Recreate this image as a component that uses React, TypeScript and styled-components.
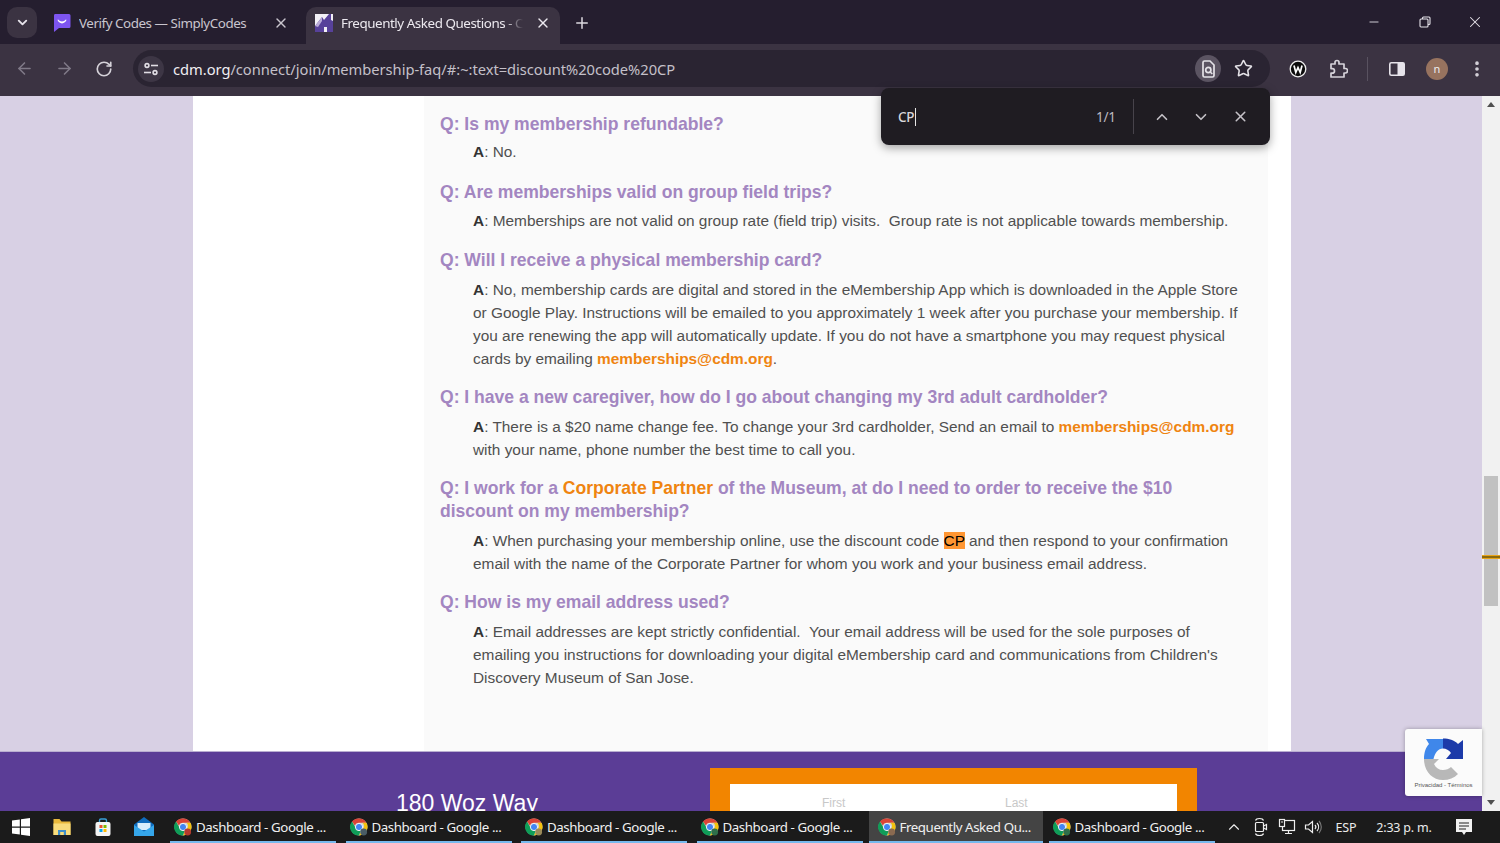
import React from "react";
import styled, { createGlobalStyle } from "styled-components";
import { ArrowLeft, ArrowRight, RotateCw, Star, X, ChevronUp, ChevronDown, Minus, Plus, EllipsisVertical } from "lucide-react";

const Global = createGlobalStyle`
  html, body { margin: 0; padding: 0; height: 100%; overflow: hidden; background: #251e2f; }
  * { box-sizing: border-box; }
`;

const Screen = styled.div`
  width: 1500px; height: 843px; display: flex; flex-direction: column; overflow: hidden; position: relative;
  font-family: "Noto Sans", "Liberation Sans", sans-serif;
`;

/* ---- tab strip ---- */
const TabStrip = styled.div`
  height: 44px; flex: none; background: #251e2f; display: flex; align-items: flex-end; padding-left: 7px;
`;
const TabMenu = styled.div`
  width: 30px; height: 31px; margin-bottom: 6px; margin-right: 7px; border-radius: 10px; background: #3b3342;
  display: flex; align-items: center; justify-content: center; color: #e6e3ea;
`;
const Tab = styled.div<{ $active?: boolean }>`
  width: 254px; height: 37px; padding: 0 9px 5px; margin-right: ${p => (p.$active ? "0" : "8px")}; display: flex; align-items: center;
  background: ${p => (p.$active ? "#3b3342" : "transparent")};
  border-radius: 10px 10px 0 0;
  color: ${p => (p.$active ? "#ece9ef" : "#c9c5ce")};
`;
const TabTitle = styled.div<{ $fade?: boolean }>`
  flex: 1; min-width: 0; margin: 0 8px; font-size: 13.4px; letter-spacing: -0.45px; white-space: nowrap; overflow: hidden;
  ${p => p.$fade ? "mask-image: linear-gradient(to right, #000 88%, transparent 98%);" : ""}
`;
const TabPlus = styled.div`
  width: 28px; margin-left: 8px; margin-bottom: 7px; height: 28px; display: flex; align-items: center; justify-content: center; color: #dcd9e0;
`;
const WindowControls = styled.div`
  margin-left: auto; display: flex; align-self: flex-start;
`;
const WindowButton = styled.div`
  width: 50.3px; height: 44px; display: flex; align-items: center; justify-content: center; color: #e6e3ea;
`;

/* ---- toolbar ---- */
const Toolbar = styled.div`
  height: 52px; flex: none; background: #3b3342; display: flex; align-items: center; padding-left: 4px; padding-bottom: 3px;
`;
const NavSlot = styled.div<{ $dim?: boolean }>`
  width: 40px; height: 40px; display: flex; align-items: center; justify-content: center;
  color: ${p => (p.$dim ? "#7f7987" : "#d5d2d9")};
`;
const Omnibox = styled.div`
  width: 1137px; height: 37px; margin: 0 8px 0 9px; border-radius: 19px; background: #2a2432; display: flex; align-items: center; padding: 0 6px 0 5px;
`;
const SiteChip = styled.div`
  width: 26px; height: 26px; border-radius: 50%; background: #3d3645; display: flex; align-items: center; justify-content: center; color: #e0dde4; flex: none;
`;
const Url = styled.div`
  margin-left: 9px; font-size: 14.7px; letter-spacing: -0.03px; color: #c4c0c9; white-space: nowrap;
  b { font-weight: 400; color: #f0eef2; }
`;
const LensChip = styled.div`
  margin-left: auto; width: 26px; height: 27px; border-radius: 50%; background: #5b5462; display: flex; align-items: center; justify-content: center; color: #e4e2e7;
`;
const StarSlot = styled.div`
  width: 34px; margin-left: 5px; margin-right: 4px; display: flex; justify-content: center; color: #e4e2e7;
`;
const ToolDivider = styled.div`
  width: 19px; display: flex; justify-content: center;
  &::before { content: ""; width: 1px; height: 24px; background: #595260; }
`;
const Avatar = styled.div`
  width: 22px; height: 22px; border-radius: 50%; background: #97735f; color: #eee; font-size: 11px; display: flex; align-items: center; justify-content: center;
`;

/* ---- page ---- */
const Viewport = styled.div`
  flex: 1; min-height: 0; display: flex; position: relative;
`;
const PageArea = styled.div`
  flex: 1; min-width: 0; display: flex; flex-direction: column; overflow: hidden;
`;
const MainBand = styled.div`
  height: 655px; flex: none; background: #d8d0e4; padding-left: 193px; display: flex;
`;
const Sheet = styled.div`
  width: 1098px; background: #fff; padding: 0 23px 0 231px; display: flex;
`;
const Article = styled.div`
  flex: 1; background: #fafafa; padding: 16.5px 24px 0 16px;
  font-family: "Liberation Sans", Arial, sans-serif;
`;
const Question = styled.h3`
  margin: 0 0 5.8px; font-size: 17.56px; line-height: 23px; font-weight: 700; color: #a386c1;
  a { color: #ef8410; }
`;
const Answer = styled.p<{ $lead?: boolean }>`
  margin: ${p => (p.$lead ? "-1px 0 17.4px 33px" : "0 0 16.4px 33px")}; font-size: 15.4px; line-height: 23px; color: #505050;
  b { color: #333; }
  a { color: #ef8410; font-weight: 700; }
`;
const Match = styled.mark`
  background: #ff9632; color: #000;
`;
const FooterBand = styled.div`
  flex: 1; min-height: 0; background: #5b3d96; border-top: 1px solid #b9aed0; display: flex; overflow: hidden;
  font-family: "Liberation Sans", Arial, sans-serif;
`;
const Address = styled.div`
  width: 710px; padding: 38px 0 0 396px; font-size: 23px; line-height: 26px; color: #fff;
`;
const FormFrame = styled.div`
  width: 487px; height: 100px; margin-top: 16px; background: #f28500; padding: 16px 20px 0;
`;
const FormInner = styled.div`
  height: 80px; background: #fff; display: flex; padding-top: 12px; font-size: 12px; color: #c8c8c8;
`;
const FieldLabel = styled.div`
  width: 183px; padding-left: 92px; line-height: 14px;
`;

const Scrollbar = styled.div`
  width: 18px; flex: none; background: #f1f1f1; display: flex; flex-direction: column; align-items: center; position: relative;
`;
const ScrollArrow = styled.div<{ $down?: boolean }>`
  height: 17px; flex: none; display: flex; align-items: center; justify-content: center;
  &::before {
    content: ""; border-left: 4px solid transparent; border-right: 4px solid transparent;
    ${p => (p.$down ? "border-top: 5px solid #505050;" : "border-bottom: 5px solid #505050;")}
  }
`;
const ScrollTrack = styled.div`
  flex: 1; width: 100%; padding: 363px 2px 0;
`;
const ScrollThumb = styled.div`
  height: 130px; background: #c1c1c1;
`;
const ScrollTick = styled.div`
  position: absolute; left: 0; right: 0; top: 459px; height: 4px; background: #8a6a10; border-top: 1px solid #e8a418; border-bottom: 1px solid #e8a418;
`;

/* ---- overlays ---- */
const FindBar = styled.div`
  position: absolute; left: 881px; top: 88px; width: 389px; height: 57px; background: #1f1c22; border-radius: 8px;
  box-shadow: 0 3px 10px rgba(0,0,0,.35); display: flex; align-items: center; padding-left: 17px; color: #c9c6cc; z-index: 5;
`;
const FindInput = styled.div`
  width: 198px; font-size: 13.5px; color: #d8d6da; display: flex; align-items: center; font-weight: 500; letter-spacing: -0.4px;
  &::after { content: ""; width: 1px; height: 18px; background: #e6e6e6; margin-left: 1px; }
`;
const FindCount = styled.div`
  width: 37px; font-size: 13.5px; color: #bdbac0; letter-spacing: -0.3px;
`;
const FindDivider = styled.div`
  width: 1px; height: 35px; background: #47434b; margin-right: 8px;
`;
const FindButton = styled.div`
  width: 39.5px; display: flex; justify-content: center; color: #c4c1c7;
`;
const Recaptcha = styled.div`
  position: absolute; left: 1405px; top: 633px; width: 77px; height: 67px; background: #fbfbfb; border-radius: 3px 0 0 3px;
  box-shadow: 0 0 4px rgba(0,0,0,.3); display: flex; flex-direction: column; align-items: center; padding-top: 8px; z-index: 4;
`;
const RecaptchaText = styled.div`
  font-family: "Liberation Sans", sans-serif; font-size: 6px; line-height: 7px; color: #555; margin-top: 1px; white-space: nowrap;
`;

/* ---- taskbar ---- */
const Taskbar = styled.div`
  height: 32px; flex: none; background: #1b1b1b; display: flex; align-items: stretch; position: relative;
`;
const PinSlot = styled.div`
  width: 41px; display: flex; align-items: center; justify-content: center;
`;
const Tasks = styled.div`
  display: flex; margin-left: -3.5px;
`;
const Task = styled.div<{ $active?: boolean; $tight?: boolean }>`
  width: ${p => (p.$active ? "174px" : "166px")};
  margin-left: ${p => (p.$tight ? "6px" : "9.5px")};
  display: flex; align-items: center; padding-left: ${p => (p.$active ? "8px" : "3px")}; padding-top: 2px; gap: 3px;
  border-bottom: 2px solid #76b9ed; background: ${p => (p.$active ? "#444444" : "transparent")};
  color: #f0f0f0; font-size: 13.3px; letter-spacing: -0.42px; white-space: nowrap;
`;
const Tray = styled.div`
  margin-left: auto; display: flex; align-items: center; padding-right: 14px; color: #ececec; font-size: 12.5px;
`;
const TraySlot = styled.div<{ $w: number }>`
  width: ${p => p.$w}px; display: flex; align-items: center; justify-content: center; letter-spacing: -0.2px;
`;

/* ---- drawings ---- */
const ChromeIcon = ({ badge }: { badge: string }) => (
  <svg width="20" height="20" viewBox="0 0 20 20">
    <circle cx="10" cy="10" r="8.5" fill="#d8d3c8" />
    <path d="M10 1.5a8.5 8.5 0 0 1 7.4 4.3H10a4.2 4.2 0 0 0-4 2.9L3 4.6A8.5 8.5 0 0 1 10 1.5z" fill="#db4437" />
    <path d="M17.4 5.8A8.5 8.5 0 0 1 10 18.5l3.6-6.2a4.2 4.2 0 0 0-.1-6.5z" fill="#f4c20d" />
    <path d="M10 18.5A8.5 8.5 0 0 1 3 4.6l3.7 6.5a4.2 4.2 0 0 0 5 2.6z" fill="#0f9d58" />
    <circle cx="10" cy="10" r="3.6" fill="#4285f4" stroke="#f3f3f3" strokeWidth="1" />
    <circle cx="14.7" cy="15" r="3.4" fill={badge} />
  </svg>
);

const SCFavicon = () => (
  <svg width="18" height="20" viewBox="0 0 18 20" style={{ flex: "none" }}>
    <path d="M2 1h14a1.5 1.5 0 0 1 1.500 1.500v11A1.500 1.500 0 0 1 16 15H6l-5 4V2.500A1.500 1.500 0 0 1 2 1z" fill="#7d55f0" />
    <path d="M4.800 6.200Q9 11 13.200 6.200L13.200 8Q9 12.800 4.800 8z" fill="#fff" />
  </svg>
);
const CdmFavicon = () => (
  <svg width="18" height="20" viewBox="0 0 18 20" style={{ flex: "none" }}>
    <rect x="0" y="1" width="18" height="18" fill="#f2f0f6" />
    <path d="M0 19V13L7 4l2 3 5-6h2v6l2 1v11h-6v-5H9v5z" fill="#57419a" />
    <path d="M0 13L7 4v4L3 14z" fill="#b9abd8" />
  </svg>
);
const LensIcon = () => (
  <svg width="18" height="20" viewBox="0 0 18 20" fill="none" stroke="currentColor" strokeWidth="1.700">
    <path d="M4 9V3.500A1.500 1.500 0 0 1 5.500 2H11l4 4v10.500a1.500 1.500 0 0 1-1.500 1.500H5.500A1.500 1.500 0 0 1 4 16.500z" />
    <circle cx="9.300" cy="11" r="2.600" />
    <path d="M11.300 13l2 2" />
  </svg>
);
const TuneIcon = () => (
  <svg width="16" height="16" viewBox="0 0 16 16" fill="none" stroke="currentColor" strokeWidth="1.600">
    <circle cx="4" cy="4.500" r="1.900" />
    <path d="M8 4.500h7" />
    <circle cx="12" cy="11.500" r="1.900" />
    <path d="M1 11.500h7" />
  </svg>
);
const RestoreIcon = () => (
  <svg width="12" height="12" viewBox="0 0 12 12" fill="none" stroke="currentColor" strokeWidth="1.100">
    <rect x="1" y="3" width="8" height="8" rx="1" />
    <path d="M3.500 3V2a1 1 0 0 1 1-1h5.500a1 1 0 0 1 1 1v5.500a1 1 0 0 1-1 1H9" />
  </svg>
);
const WBadge = () => (
  <svg width="18" height="18" viewBox="0 0 18 18">
    <circle cx="9" cy="9" r="7.800" fill="#0b0b0b" stroke="#eee" strokeWidth="1.300" />
    <path d="M5 5.500l1.800 7L9 7.500l2.200 5 1.800-7" fill="none" stroke="#fff" strokeWidth="1.700" />
  </svg>
);
const PuzzleIcon = () => (
  <svg width="20" height="20" viewBox="0 0 20 20" fill="none" stroke="currentColor" strokeWidth="1.700" strokeLinejoin="round">
    <path d="M3 5h4V3.500a2 2 0 0 1 4 0V5h5v4.500h1.300a2.200 2.200 0 0 1 0 4.500H16v4H3v-3.800h1.200a2.300 2.300 0 0 0 0-4.600H3z" />
  </svg>
);
const PanelIcon = () => (
  <svg width="18" height="18" viewBox="0 0 18 18">
    <rect x="1.800" y="2.800" width="14.400" height="12.400" rx="1.500" fill="none" stroke="#e6e3ea" strokeWidth="1.600" />
    <rect x="9.500" y="2.800" width="6.700" height="12.400" fill="#e6e3ea" />
  </svg>
);
const WinLogo = () => (
  <svg width="18" height="18" viewBox="0 0 18 18" fill="#fff">
    <path d="M0 2.500l7.800-1.100V8.500H0zM9 1.200L18 0v8.500H9zM0 9.700h7.800v6.900L0 15.500zM9 9.700h9V18l-9-1.200z" />
  </svg>
);
const FolderIcon = () => (
  <svg width="20" height="20" viewBox="0 0 20 20">
    <path d="M1.500 2h6l2 2.500h9V18h-17z" fill="#e9b93c" />
    <path d="M1.500 6.500h17V18h-17z" fill="#f8dc7c" />
    <path d="M6 18v-5h8v5h-2.200v-3H8.200v3z" fill="#3f8ec9" />
  </svg>
);
const StoreIcon = () => (
  <svg width="20" height="20" viewBox="0 0 20 20">
    <path d="M6.500 5V3.500a1.500 1.500 0 0 1 1.500-1.500h4a1.500 1.500 0 0 1 1.500 1.500V5" fill="none" stroke="#3aa0d8" strokeWidth="1.400" />
    <rect x="2.500" y="5" width="15" height="14" rx="2" fill="#f4f4f4" />
    <rect x="6.500" y="8" width="3" height="3" fill="#e8502e" />
    <rect x="10.500" y="8" width="3" height="3" fill="#7fba00" />
    <rect x="6.500" y="12" width="3" height="3" fill="#00a4ef" />
    <rect x="10.500" y="12" width="3" height="3" fill="#ffb900" />
  </svg>
);
const MailIcon = () => (
  <svg width="20" height="20" viewBox="0 0 20 20">
    <path d="M0 7.500L10 0l10 7.500V19H0z" fill="#0f6cbd" />
    <path d="M3.500 6h13v7h-13z" fill="#d8eefc" />
    <path d="M0 8l10 6.500L20 8v11H0z" fill="#35a6ea" />
  </svg>
);
const MeetIcon = () => (
  <svg width="16" height="22" viewBox="0 0 16 22" fill="none" stroke="#eee" strokeWidth="1.200">
    <rect x="2.500" y="6.500" width="8" height="9" rx="1" />
    <path d="M10.500 10l3-1.500v5l-3-1.500M2.500 4.500Q3 2.500 6.500 2.500T10.500 4.500M2.500 17.500Q3 19.500 6.500 19.500T10.500 17.500" />
  </svg>
);
const NetworkIcon = () => (
  <svg width="20" height="20" viewBox="0 0 20 20" fill="none" stroke="#eee" strokeWidth="1.200">
    <rect x="5.500" y="3.500" width="12" height="10" />
    <path d="M11.500 13.500v3M8 16.500h7" />
    <rect x="2.500" y="2.500" width="5" height="7" fill="#1b1b1b" />
    <path d="M4 5h2" />
  </svg>
);
const VolumeIcon = () => (
  <svg width="20" height="20" viewBox="0 0 20 20" fill="none" stroke="#eee" strokeWidth="1.200">
    <path d="M2.500 8v4h3l4 3.500v-11l-4 3.500zM12 8a3 3 0 0 1 0 4M14 6a6 6 0 0 1 0 8" />
    <path d="M16 4a9 9 0 0 1 0 12" stroke="#777" />
  </svg>
);
const NoteIcon = () => (
  <svg width="18" height="18" viewBox="0 0 18 18">
    <path d="M1 1h16v13h-6l-2 3-2-3H1z" fill="#f2f2f2" />
    <path d="M4 5h10M4 8h10M4 11h7" stroke="#222" strokeWidth="1.200" />
  </svg>
);
const RecaptchaLogo = () => (
  <svg width="42" height="44" viewBox="0 0 42 44">
    <path d="M1 22H16L11 27C13 31 16 33 20 33C23 33 26 32 28 30L35 37C31 41 26 43 20 43C9 43 1 34 1 22Z" fill="#b8b8b8" />
    <path d="M1 22C1 15 3 10 6 7L3 2H20V11.500C15 11.500 12 16 10.500 22Z" fill="#3f87ea" />
    <path d="M20 1.500C26 1.500 31 3 35 7L40 3V22H23L28 16C26 13 23 11.500 20 11.500Z" fill="#1c3aa9" />
  </svg>
);

const badges = ["#b43a2e", "#4a5d66", "#9a8a5a", "#2f6f4a", "#8a6a50", "#2f6f4a"];

const App: React.FC = () => (
  <Screen>
    <Global />
    <TabStrip>
      <TabMenu><ChevronDown size={15} strokeWidth={3} /></TabMenu>
      <Tab>
        <SCFavicon />
        <TabTitle>Verify Codes — SimplyCodes</TabTitle>
        <X size={16} strokeWidth={2} />
      </Tab>
      <Tab $active>
        <CdmFavicon />
        <TabTitle $fade>Frequently Asked Questions - Children's Discovery Museum</TabTitle>
        <X size={16} strokeWidth={2} />
      </Tab>
      <TabPlus><Plus size={18} strokeWidth={2} /></TabPlus>
      <WindowControls>
        <WindowButton><Minus size={14} strokeWidth={1.5} /></WindowButton>
        <WindowButton><RestoreIcon /></WindowButton>
        <WindowButton><X size={18} strokeWidth={1.4} /></WindowButton>
      </WindowControls>
    </TabStrip>

    <Toolbar>
      <NavSlot $dim><ArrowLeft size={19} /></NavSlot>
      <NavSlot $dim><ArrowRight size={19} /></NavSlot>
      <NavSlot><RotateCw size={18} strokeWidth={2.200} /></NavSlot>
      <Omnibox>
        <SiteChip><TuneIcon /></SiteChip>
        <Url><b>cdm.org</b>/connect/join/membership-faq/#:~:text=discount%20code%20CP</Url>
        <LensChip><LensIcon /></LensChip>
        <StarSlot><Star size={19} strokeWidth={2} /></StarSlot>
      </Omnibox>
      <NavSlot><WBadge /></NavSlot>
      <NavSlot><PuzzleIcon /></NavSlot>
      <ToolDivider />
      <NavSlot><PanelIcon /></NavSlot>
      <NavSlot><Avatar>n</Avatar></NavSlot>
      <NavSlot><EllipsisVertical size={20} strokeWidth={2.400} /></NavSlot>
    </Toolbar>

    <Viewport>
      <PageArea>
        <MainBand>
          <Sheet>
            <Article>
              <Question>Q: Is my membership refundable?</Question>
              <Answer $lead><b>A</b>: No.</Answer>
              <Question>Q: Are memberships valid on group field trips?</Question>
              <Answer><b>A</b>: Memberships are not valid on group rate (field trip) visits.&nbsp; Group rate is not applicable towards membership.</Answer>
              <Question>Q: Will I receive a physical membership card?</Question>
              <Answer><b>A</b>: No, membership cards are digital and stored in the eMembership App which is downloaded in the Apple Store or Google Play. Instructions will be emailed to you approximately 1 week after you purchase your membership. If you are renewing the app will automatically update. If you do not have a smartphone you may request physical cards by emailing <a>memberships@cdm.org</a>.</Answer>
              <Question>Q: I have a new caregiver, how do I go about changing my 3rd adult cardholder?</Question>
              <Answer><b>A</b>: There is a $20 name change fee. To change your 3rd cardholder, Send an email to <a>memberships@cdm.org</a> with your name, phone number the best time to call you.</Answer>
              <Question>Q: I work for a <a>Corporate Partner</a> of the Museum, at do I need to order to receive the $10 discount on my membership?</Question>
              <Answer><b>A</b>: When purchasing your membership online, use the discount code <Match>CP</Match> and then respond to your confirmation email with the name of the Corporate Partner for whom you work and your business email address.</Answer>
              <Question>Q: How is my email address used?</Question>
              <Answer><b>A</b>: Email addresses are kept strictly confidential.&nbsp; Your email address will be used for the sole purposes of emailing you instructions for downloading your digital eMembership card and communications from Children's Discovery Museum of San Jose.</Answer>
            </Article>
          </Sheet>
        </MainBand>
        <FooterBand>
          <Address>180 Woz Way</Address>
          <FormFrame>
            <FormInner>
              <FieldLabel>First</FieldLabel>
              <FieldLabel>Last</FieldLabel>
            </FormInner>
          </FormFrame>
        </FooterBand>
      </PageArea>
      <Scrollbar>
        <ScrollArrow />
        <ScrollTrack><ScrollThumb /></ScrollTrack>
        <ScrollArrow $down />
        <ScrollTick />
      </Scrollbar>
      <Recaptcha>
        <RecaptchaLogo />
        <RecaptchaText>Privacidad - Términos</RecaptchaText>
      </Recaptcha>
    </Viewport>

    <FindBar>
      <FindInput>CP</FindInput>
      <FindCount>1/1</FindCount>
      <FindDivider />
      <FindButton><ChevronUp size={18} strokeWidth={2.200} /></FindButton>
      <FindButton><ChevronDown size={18} strokeWidth={2.200} /></FindButton>
      <FindButton><X size={17} strokeWidth={2.200} /></FindButton>
    </FindBar>

    <Taskbar>
      <PinSlot><WinLogo /></PinSlot>
      <PinSlot><FolderIcon /></PinSlot>
      <PinSlot><StoreIcon /></PinSlot>
      <PinSlot><MailIcon /></PinSlot>
      <Tasks>
        <Task><ChromeIcon badge={badges[0]} />Dashboard - Google ...</Task>
        <Task><ChromeIcon badge={badges[1]} />Dashboard - Google ...</Task>
        <Task><ChromeIcon badge={badges[2]} />Dashboard - Google ...</Task>
        <Task><ChromeIcon badge={badges[3]} />Dashboard - Google ...</Task>
        <Task $active $tight><ChromeIcon badge={badges[4]} />Frequently Asked Qu...</Task>
        <Task $tight><ChromeIcon badge={badges[5]} />Dashboard - Google ...</Task>
      </Tasks>
      <Tray>
        <TraySlot $w={26}><ChevronUp size={18} strokeWidth={1.500} /></TraySlot>
        <TraySlot $w={27}><MeetIcon /></TraySlot>
        <TraySlot $w={26}><NetworkIcon /></TraySlot>
        <TraySlot $w={26}><VolumeIcon /></TraySlot>
        <TraySlot $w={40}>ESP</TraySlot>
        <TraySlot $w={76}>2:33 p. m.</TraySlot>
        <TraySlot $w={44}><NoteIcon /></TraySlot>
      </Tray>
    </Taskbar>
  </Screen>
);

export default App;
